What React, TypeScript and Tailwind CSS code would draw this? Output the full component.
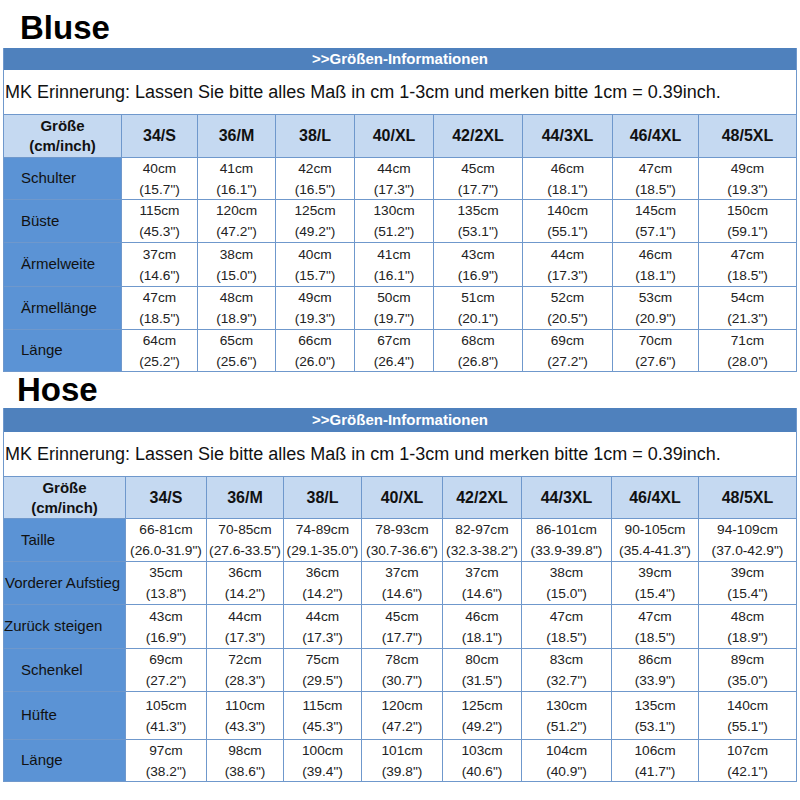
import React from "react";

type Row = { label: string; pl: string; h: string; vals: [string, string][] };

const sizes = ["34/S", "36/M", "38/L", "40/XL", "42/2XL", "44/3XL", "46/4XL", "48/5XL"];

const mk = (cm: string[], inch: string[]): [string, string][] => cm.map((c, i) => [c, inch[i]]);

const bluseRows: Row[] = [
  { label: "Schulter", pl: "pl-[17px]", h: "h-[42px]", vals: mk(["40cm", "41cm", "42cm", "44cm", "45cm", "46cm", "47cm", "49cm"], ['(15.7")', '(16.1")', '(16.5")', '(17.3")', '(17.7")', '(18.1")', '(18.5")', '(19.3")']) },
  { label: "Büste", pl: "pl-[17px]", h: "h-[43px]", vals: mk(["115cm", "120cm", "125cm", "130cm", "135cm", "140cm", "145cm", "150cm"], ['(45.3")', '(47.2")', '(49.2")', '(51.2")', '(53.1")', '(55.1")', '(57.1")', '(59.1")']) },
  { label: "Ärmelweite", pl: "pl-[17px]", h: "h-[44px]", vals: mk(["37cm", "38cm", "40cm", "41cm", "43cm", "44cm", "46cm", "47cm"], ['(14.6")', '(15.0")', '(15.7")', '(16.1")', '(16.9")', '(17.3")', '(18.1")', '(18.5")']) },
  { label: "Ärmellänge", pl: "pl-[17px]", h: "h-[43px]", vals: mk(["47cm", "48cm", "49cm", "50cm", "51cm", "52cm", "53cm", "54cm"], ['(18.5")', '(18.9")', '(19.3")', '(19.7")', '(20.1")', '(20.5")', '(20.9")', '(21.3")']) },
  { label: "Länge", pl: "pl-[17px]", h: "h-[42px]", vals: mk(["64cm", "65cm", "66cm", "67cm", "68cm", "69cm", "70cm", "71cm"], ['(25.2")', '(25.6")', '(26.0")', '(26.4")', '(26.8")', '(27.2")', '(27.6")', '(28.0")']) },
];

const hoseRows: Row[] = [
  { label: "Taille", pl: "pl-[17px]", h: "h-[43px]", vals: mk(["66-81cm", "70-85cm", "74-89cm", "78-93cm", "82-97cm", "86-101cm", "90-105cm", "94-109cm"], ['(26.0-31.9")', '(27.6-33.5")', '(29.1-35.0")', '(30.7-36.6")', '(32.3-38.2")', '(33.9-39.8")', '(35.4-41.3")', '(37.0-42.9")']) },
  { label: "Vorderer Aufstieg", pl: "pl-[1px]", h: "h-[43px]", vals: mk(["35cm", "36cm", "36cm", "37cm", "37cm", "38cm", "39cm", "39cm"], ['(13.8")', '(14.2")', '(14.2")', '(14.6")', '(14.6")', '(15.0")', '(15.4")', '(15.4")']) },
  { label: "Zurück steigen", pl: "pl-0", h: "h-[44px]", vals: mk(["43cm", "44cm", "44cm", "45cm", "46cm", "47cm", "47cm", "48cm"], ['(16.9")', '(17.3")', '(17.3")', '(17.7")', '(18.1")', '(18.5")', '(18.5")', '(18.9")']) },
  { label: "Schenkel", pl: "pl-[17px]", h: "h-[43px]", vals: mk(["69cm", "72cm", "75cm", "78cm", "80cm", "83cm", "86cm", "89cm"], ['(27.2")', '(28.3")', '(29.5")', '(30.7")', '(31.5")', '(32.7")', '(33.9")', '(35.0")']) },
  { label: "Hüfte", pl: "pl-[17px]", h: "h-[48px]", vals: mk(["105cm", "110cm", "115cm", "120cm", "125cm", "130cm", "135cm", "140cm"], ['(41.3")', '(43.3")', '(45.3")', '(47.2")', '(49.2")', '(51.2")', '(53.1")', '(55.1")']) },
  { label: "Länge", pl: "pl-[17px]", h: "h-[42px]", vals: mk(["97cm", "98cm", "100cm", "101cm", "103cm", "104cm", "106cm", "107cm"], ['(38.2")', '(38.6")', '(39.4")', '(39.8")', '(40.6")', '(40.9")', '(41.7")', '(42.1")']) },
];

const bluseW = ["w-[117px]", "w-[76px]", "w-[78px]", "w-[79px]", "w-[79px]", "w-[89px]", "w-[90px]", "w-[86px]", "w-[98px]"];
const hoseW = ["w-[121px]", "w-[81px]", "w-[77px]", "w-[78px]", "w-[81px]", "w-[79px]", "w-[90px]", "w-[87px]", "w-[98px]"];

function SizeTable({ widths, barH, headH, rows }: { widths: string[]; barH: string; headH: string; rows: Row[] }) {
  return (
    <div className="ml-[3px] w-[794px] border-x border-b border-[#6f98cc]">
      <div className={`flex items-center justify-center bg-[#4f81bd] text-[15px] font-bold text-white ${barH}`}>
        &gt;&gt;Größen-Informationen
      </div>
      <div className="flex h-[44px] items-center bg-white pl-[1px] text-[18px] text-[#111]">
        MK Erinnerung: Lassen Sie bitte alles Maß in cm 1-3cm und merken bitte 1cm = 0.39inch.
      </div>
      <div className={`flex border-t border-[#6f98cc] bg-[#c5d9f1] ${headH}`}>
        <div className={`flex flex-col items-center justify-center text-[15px] font-bold leading-[20px] text-[#111] ${widths[0]}`}>
          <span>Größe</span>
          <span>(cm/inch)</span>
        </div>
        {sizes.map((s, i) => (
          <div
            key={s}
            className={`flex items-center justify-center border-l border-[#6f98cc] text-[16px] font-bold text-[#111] ${widths[i + 1]}`}
          >
            {s}
          </div>
        ))}
      </div>
      {rows.map((r) => (
        <div key={r.label} className={`flex border-t border-[#6f98cc] ${r.h}`}>
          <div className={`flex items-center whitespace-nowrap bg-[#5b93d5] text-[15px] text-[#111] ${widths[0]} ${r.pl}`}>
            {r.label}
          </div>
          {r.vals.map(([a, b], i) => (
            <div
              key={i}
              className={`flex flex-col items-center justify-center whitespace-nowrap border-l border-[#6f98cc] bg-white text-[13.7px] leading-[21px] text-[#222] ${widths[i + 1]}`}
            >
              <span>{a}</span>
              <span>{b}</span>
            </div>
          ))}
        </div>
      ))}
    </div>
  );
}

export default function App() {
  return (
    <div className="h-[800px] w-[800px] bg-white font-['Liberation_Sans',Arial,sans-serif]">
      <div className="h-[48px] pl-[20px] pt-[11px] text-[33px] font-bold leading-none text-black">Bluse</div>
      <SizeTable widths={bluseW} barH="h-[22px]" headH="h-[43px]" rows={bluseRows} />
      <div className="h-[36px] pl-[17px] pt-[1px] text-[33px] font-bold leading-none text-black">Hose</div>
      <SizeTable widths={hoseW} barH="h-[24px]" headH="h-[42px]" rows={hoseRows} />
    </div>
  );
}
